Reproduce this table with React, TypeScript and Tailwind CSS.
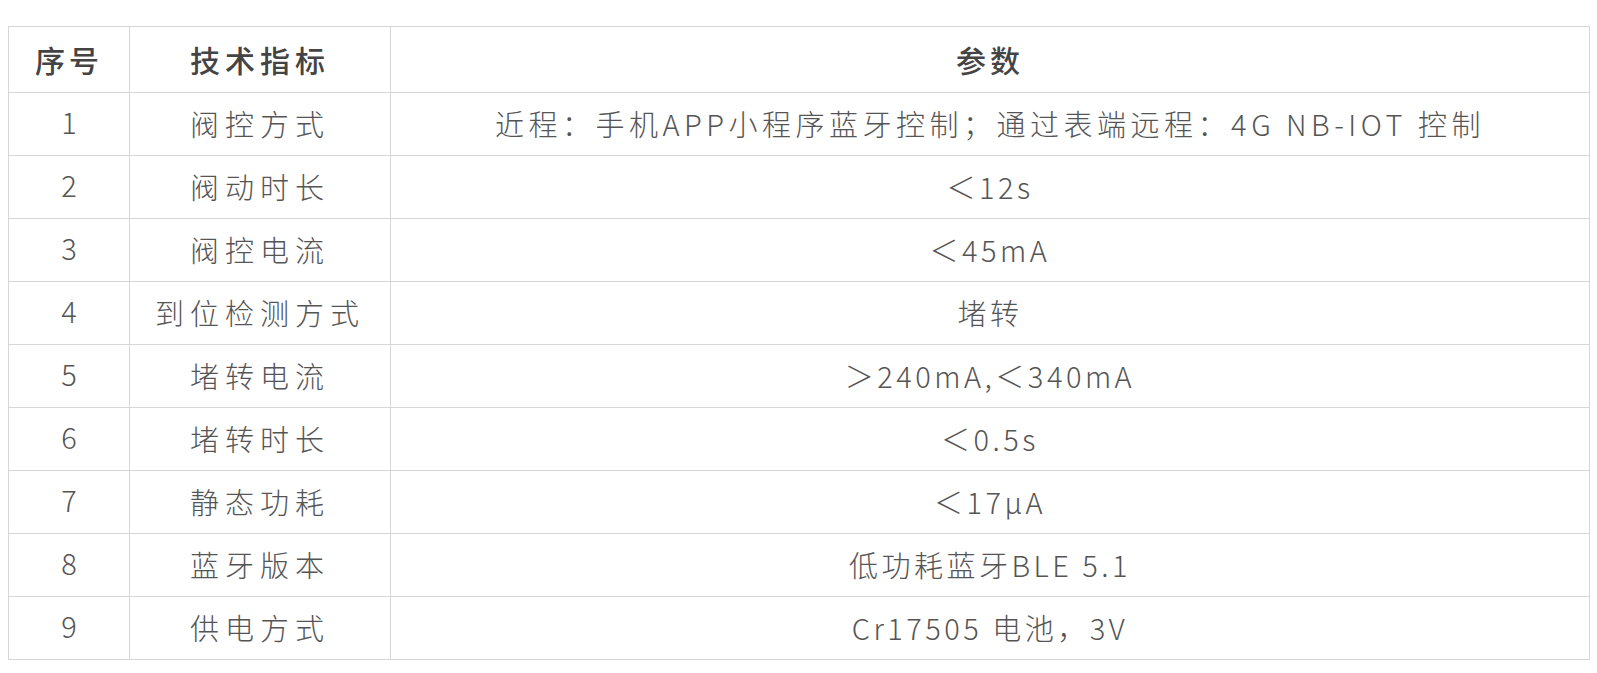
const rows: [string, string, string][] = [
  ['1', '阀控方式', '近程：手机APP小程序蓝牙控制；通过表端远程：4G NB-IOT 控制'],
  ['2', '阀动时长', '＜12s'],
  ['3', '阀控电流', '＜45mA'],
  ['4', '到位检测方式', '堵转'],
  ['5', '堵转电流', '＞240mA,＜340mA'],
  ['6', '堵转时长', '＜0.5s'],
  ['7', '静态功耗', '＜17μA'],
  ['8', '蓝牙版本', '低功耗蓝牙BLE 5.1'],
  ['9', '供电方式', 'Cr17505 电池，3V'],
]

export default function App() {
  return (
    <div className="min-h-screen bg-white pt-[26px] pl-[8px] font-['Noto_Sans_CJK_SC',sans-serif]">
      <table className="w-[1582px] border-collapse table-fixed text-center">
        <colgroup>
          <col className="w-[121px]" />
          <col className="w-[261px]" />
          <col />
        </colgroup>
        <thead>
          <tr className="h-[66px]">
            <th className="border border-[#d6d6d6] text-[30px] font-medium tracking-[4px] text-[#444]">序号</th>
            <th className="border border-[#d6d6d6] text-[30px] font-medium tracking-[5px] text-[#444]">技术指标</th>
            <th className="border border-[#d6d6d6] text-[30px] font-medium tracking-[4px] text-[#444]">参数</th>
          </tr>
        </thead>
        <tbody>
          {rows.map(([n, name, value], i) => (
            <tr key={n} className="h-[63px]">
              <td className="border border-[#d6d6d6] text-[29px] font-light text-[#555] pb-[4px]">{n}</td>
              <td className="border border-[#d6d6d6] text-[29px] font-light tracking-[6px] text-[#555]">{name}</td>
              <td
                className={
                  i === 0
                    ? 'border border-[#d6d6d6] text-[29px] font-light tracking-[4.5px] text-[#555]'
                    : 'border border-[#d6d6d6] text-[29px] font-light tracking-[3.5px] text-[#555]'
                }
              >
                {value}
              </td>
            </tr>
          ))}
        </tbody>
      </table>
    </div>
  )
}
